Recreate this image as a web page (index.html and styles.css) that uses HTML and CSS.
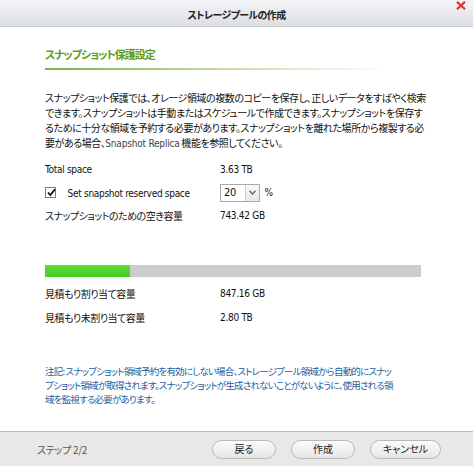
FILE: index.html
```html
<!DOCTYPE html>
<html>
<head>
<meta charset="UTF-8">
<title>ストレージプールの作成</title>
<link rel="stylesheet" href="styles.css">
</head>
<body>
<div class="dialog">
  <div class="titlebar">
    <span class="title">ストレージプールの作成</span>
    <span class="close"><svg width="10" height="9" viewBox="0 0 10 9"><path d="M1 0.8 L9 8.2 M9 0.8 L1 8.2" stroke="#e2302a" stroke-width="2.2"/></svg></span>
  </div>

  <div class="content">
    <h3 class="heading">スナップショット保護設定</h3>
    <div class="heading-line"></div>

    <p class="intro">スナップショット保護では、オレージ領域の複数のコピーを保存し、正しいデータをすばやく検索<br>できます。スナップショットは手動またはスケジュールで作成できます。スナップショットを保存す<br>るために十分な領域を予約する必要があります。スナップショットを離れた場所から複製する必<br>要がある場合、<span class="latin">Snapshot Replica</span> 機能を参照してください。</p>

    <table class="info">
      <tr>
        <td class="label latin">Total space</td>
        <td class="value latin">3.63 TB</td>
      </tr>
      <tr>
        <td class="label latin">
          <span class="check"><svg width="11" height="11" viewBox="0 0 11 11"><path d="M2 5.5 L4.3 8 L9 2.2" fill="none" stroke="#111" stroke-width="1.8"/></svg></span>
          <span class="check-label">Set snapshot reserved space</span>
        </td>
        <td class="value latin">
          <span class="select"><span class="select-val">20</span><span class="select-arrow"><svg width="7" height="5" viewBox="0 0 7 5"><path d="M0.5 0.8 L3.5 4 L6.5 0.8" fill="none" stroke="#666" stroke-width="1.3"/></svg></span></span>
          <span class="pct">%</span>
        </td>
      </tr>
      <tr>
        <td class="label">スナップショットのための空き容量</td>
        <td class="value latin">743.42 GB</td>
      </tr>
    </table>

    <div class="bar">
      <div class="bar-fill" style="width: 22.6%"></div>
    </div>

    <table class="info estimate">
      <tr>
        <td class="label">見積もり割り当て容量</td>
        <td class="value latin">847.16 GB</td>
      </tr>
      <tr>
        <td class="label">見積もり未割り当て容量</td>
        <td class="value latin">2.80 TB</td>
      </tr>
    </table>

    <p class="note">注記: スナップショット領域予約を有効にしない場合、ストレージプール領域から自動的にスナッ<br>プショット領域が取得されます。スナップショットが生成されないことがないように、使用される領<br>域を監視する必要があります。</p>
  </div>

  <div class="footer">
    <span class="step">ステップ 2/2</span>
    <div class="buttons">
      <button>戻る</button>
      <button>作成</button>
      <button class="wide">キャンセル</button>
    </div>
  </div>
</div>
</body>
</html>
```

FILE: styles.css
```css
  body {
    margin: 0;
    padding: 0;
    background-color: #fff;
    font-family: "Noto Sans CJK JP", sans-serif;
    font-feature-settings: "palt";
    color: #111;
  }

  .dialog {
    width: 473px;
    height: 466px;
    display: flex;
    flex-direction: column;
    overflow: hidden;
  }

  .titlebar {
    flex: 0 0 25px;
    box-sizing: border-box;
    border-bottom: 1px solid #c8ccd3;
    background: linear-gradient(#f3f4f6, #dcdfe5);
    position: relative;
    text-align: center;
  }

  .title {
    font-size: 10px;
    font-weight: bold;
    letter-spacing: -0.6px;
    line-height: 22px;
    color: #222;
  }

  .close {
    position: absolute;
    right: 7px;
    top: 1px;
    line-height: 0;
  }

  .content {
    flex: 1 1 auto;
    min-height: 0;
    padding: 19px 50px 0 45px;
  }

  .heading {
    margin: 0;
    font-size: 11px;
    font-weight: bold;
    letter-spacing: -1px;
    line-height: 16px;
    color: #5f9c1c;
  }

  .heading-line {
    margin-top: 6px;
    width: 345px;
    height: 2px;
    background: linear-gradient(to right, #79b04a, #b9d89a 45%, rgba(255, 255, 255, 0));
  }

  .intro {
    margin: 20px 0 0 0;
    font-size: 10px;
    letter-spacing: -0.45px;
    line-height: 15px;
    color: #111;
    white-space: nowrap;
  }

  .latin {
    font-family: "DejaVu Sans Condensed", "DejaVu Sans", sans-serif;
    font-size: 10px;
  }

  .intro .latin {
    color: #444;
    letter-spacing: -0.2px;
  }

  .info {
    margin-top: 7px;
    border-collapse: collapse;
  }

  .info td {
    padding: 0;
    height: 23px;
    font-size: 10px;
    letter-spacing: -0.5px;
    vertical-align: middle;
  }

  .info td.latin {
    letter-spacing: -0.3px;
  }

  .label {
    width: 175px;
    white-space: nowrap;
  }

  .value {
    white-space: nowrap;
  }

  .check {
    display: inline-block;
    width: 11px;
    height: 11px;
    border: 1px solid #3d8fc8;
    vertical-align: middle;
    margin-right: 9px;
    box-sizing: border-box;
    position: relative;
  }

  .check svg {
    position: absolute;
    left: 0;
    top: -1px;
  }

  .check-label {
    vertical-align: middle;
  }

  .select {
    display: inline-flex;
    width: 40px;
    height: 18px;
    border: 1px solid #aaa;
    box-sizing: border-box;
    vertical-align: middle;
    background: #fff;
  }

  .select-val {
    flex: 1;
    padding-left: 3px;
    line-height: 16px;
    font-size: 11px;
  }

  .select-arrow {
    width: 13px;
    border-left: 1px solid #d0d0d0;
    background: linear-gradient(#fafafa, #e8e8e8);
    display: flex;
    align-items: center;
    justify-content: center;
  }

  .pct {
    margin-left: 2px;
    vertical-align: middle;
  }

  .bar {
    margin-top: 38px;
    width: 376px;
    height: 12px;
    background-color: #cccccc;
  }

  .bar-fill {
    height: 100%;
    background: linear-gradient(#5ce03a, #42cc22);
  }

  .estimate {
    margin-top: 4px;
  }

  .estimate td {
    height: 24px;
  }

  .note {
    margin: 35px 0 0 0;
    font-size: 9.5px;
    letter-spacing: -0.8px;
    line-height: 14px;
    color: #1d5e9e;
    white-space: nowrap;
  }

  .footer {
    flex: 0 0 35px;
    box-sizing: border-box;
    border-top: 1px solid #bdbdbd;
    background-color: #e8e8e8;
    display: flex;
    align-items: center;
    padding: 0 32px 0 37px;
  }

  .step {
    font-size: 10px;
    letter-spacing: -0.3px;
    color: #555;
    flex: 1;
  }

  .buttons {
    display: flex;
    gap: 15px;
  }

  .buttons button {
    height: 19px;
    width: 64px;
    padding: 0;
    border: 1px solid #b8b8b8;
    border-radius: 10px;
    background: linear-gradient(#fbfbfb, #e6e6e6);
    font-family: "Noto Sans CJK JP", sans-serif;
    font-feature-settings: "palt";
    font-size: 10px;
    color: #222;
    line-height: 16px;
    cursor: pointer;
  }

  .buttons button.wide {
    width: 71px;
  }
```
